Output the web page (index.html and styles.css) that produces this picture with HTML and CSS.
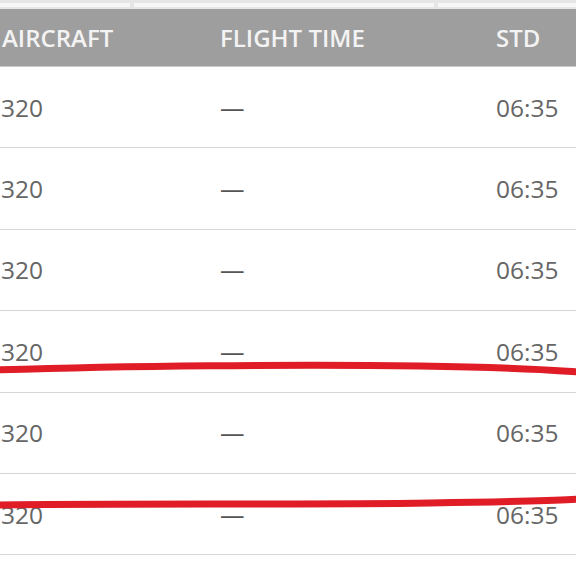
FILE: index.html
```html
<!DOCTYPE html>
<html>
<head>
<meta charset="utf-8">
<link rel="stylesheet" href="styles.css">
</head>
<body>
<div class="page">
  <div class="topstrip"><div class="tab t1"></div><div class="tab t2"></div><div class="tab t3"></div></div>
  <div class="table">
    <div class="row head">
      <div class="c1">AIRCRAFT</div>
      <div class="c2">FLIGHT TIME</div>
      <div class="c3">STD</div>
    </div>
    <div class="row"><div class="c1">320</div><div class="c2 dash">—</div><div class="c3">06:35</div></div>
    <div class="row"><div class="c1">320</div><div class="c2 dash">—</div><div class="c3">06:35</div></div>
    <div class="row"><div class="c1">320</div><div class="c2 dash">—</div><div class="c3">06:35</div></div>
    <div class="row"><div class="c1">320</div><div class="c2 dash">—</div><div class="c3">06:35</div></div>
    <div class="row"><div class="c1">320</div><div class="c2 dash">—</div><div class="c3">06:35</div></div>
    <div class="row"><div class="c1">320</div><div class="c2 dash">—</div><div class="c3">06:35</div></div>
  </div>
  <svg class="marks" width="576" height="576" viewBox="0 0 576 576">
    <path d="M-4 370 C 120 366, 300 364, 420 366 S 560 371, 580 372" stroke="#e01d27" stroke-width="7" fill="none" stroke-linecap="round"/>
    <path d="M-4 505 C 120 503, 300 505, 430 503 S 560 500, 580 499" stroke="#e01d27" stroke-width="7" fill="none" stroke-linecap="round"/>
  </svg>
</div>
</body>
</html>
```
FILE: styles.css
```css
html, body {
  margin: 0;
  padding: 0;
  background: #ffffff;
}
.page {
  position: relative;
  width: 576px;
  height: 576px;
  overflow: hidden;
  font-family: "Open Sans", "Liberation Sans", sans-serif;
}
.topstrip {
  height: 9px;
  background: #e6e6e6;
  display: flex;
  gap: 4px;
  padding-top: 3px;
  box-sizing: border-box;
}
.tab {
  height: 4px;
  background: #f7f7f7;
}
.t1 { width: 130px; }
.t2 { width: 300px; }
.t3 { flex: 1; }
.row {
  display: flex;
  align-items: center;
  height: 80.4px;
  border-bottom: 1px solid #d6d6d6;
  font-size: 24.5px;
  color: #666666;
}
.row.head {
  height: 57px;
  background: #9e9e9e;
  color: #f3f3f3;
  font-weight: 600;
  font-size: 24px;
  border-bottom: 1px solid #c9c9c9;
}
.c1 {
  width: 218px;
  padding-left: 1px;
}
.head .c1 { padding-left: 2px; width: 217px; }
.c2 {
  width: 276px;
  padding-left: 1px;
}
.c3 {
  flex: 1;
}
.dash {
  color: #555555;
}
.marks {
  position: absolute;
  left: 0;
  top: 0;
  pointer-events: none;
}
```
